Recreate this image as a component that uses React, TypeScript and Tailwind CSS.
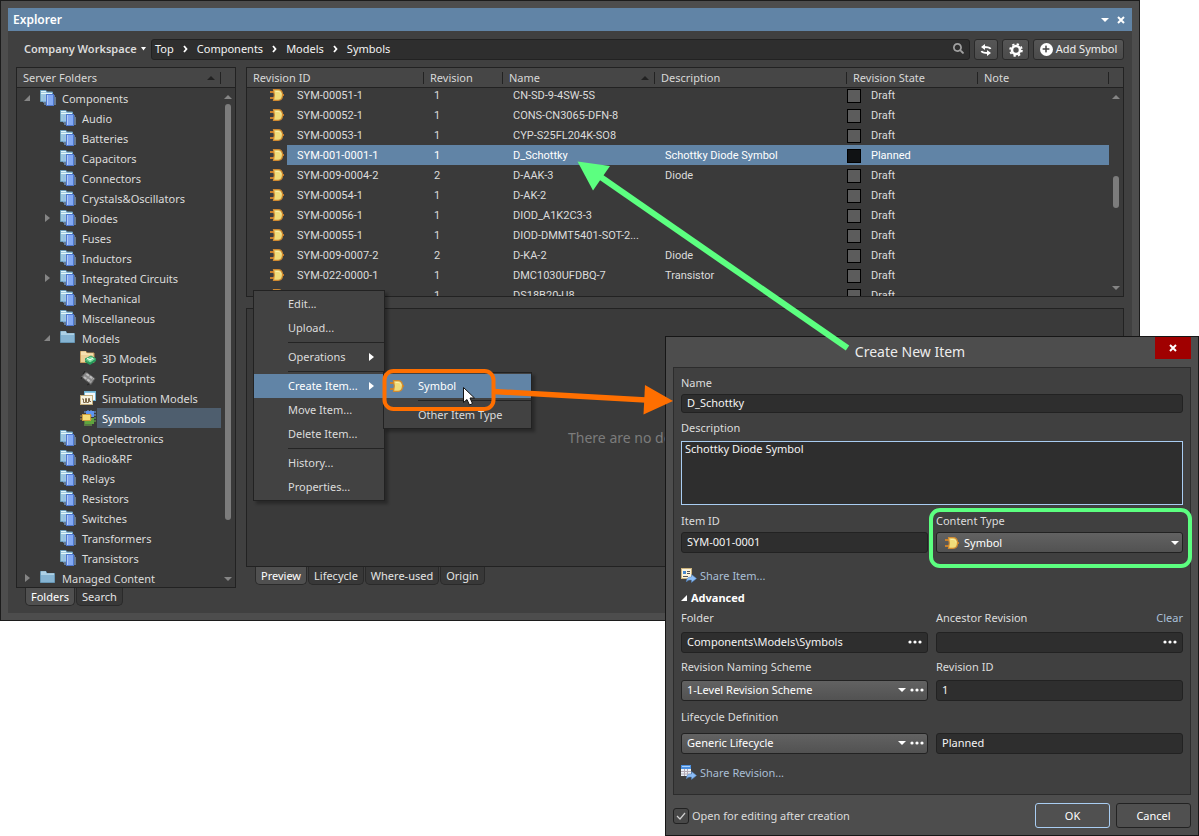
import { useState } from "react";
import { FaPlus, FaSearch } from "react-icons/fa";

const tree = [
  { name: "Components", depth: 0, icon: "parts", arrow: "open" },
  { name: "Audio", depth: 1, icon: "parts" },
  { name: "Batteries", depth: 1, icon: "parts" },
  { name: "Capacitors", depth: 1, icon: "parts" },
  { name: "Connectors", depth: 1, icon: "parts" },
  { name: "Crystals&Oscillators", depth: 1, icon: "parts" },
  { name: "Diodes", depth: 1, icon: "parts", arrow: "closed" },
  { name: "Fuses", depth: 1, icon: "parts" },
  { name: "Inductors", depth: 1, icon: "parts" },
  { name: "Integrated Circuits", depth: 1, icon: "parts", arrow: "closed" },
  { name: "Mechanical", depth: 1, icon: "parts" },
  { name: "Miscellaneous", depth: 1, icon: "parts" },
  { name: "Models", depth: 1, icon: "folder", arrow: "open" },
  { name: "3D Models", depth: 2, icon: "model3d" },
  { name: "Footprints", depth: 2, icon: "footprint" },
  { name: "Simulation Models", depth: 2, icon: "simulation" },
  { name: "Symbols", depth: 2, icon: "symbols" },
  { name: "Optoelectronics", depth: 1, icon: "parts" },
  { name: "Radio&RF", depth: 1, icon: "parts" },
  { name: "Relays", depth: 1, icon: "parts" },
  { name: "Resistors", depth: 1, icon: "parts" },
  { name: "Switches", depth: 1, icon: "parts" },
  { name: "Transformers", depth: 1, icon: "parts" },
  { name: "Transistors", depth: 1, icon: "parts" },
  { name: "Managed Content", depth: 0, icon: "folder", arrow: "closed" },
];

const rows = [
  { id: "SYM-00051-1", rev: "1", name: "CN-SD-9-4SW-5S", desc: "", state: "Draft" },
  { id: "SYM-00052-1", rev: "1", name: "CONS-CN3065-DFN-8", desc: "", state: "Draft" },
  { id: "SYM-00053-1", rev: "1", name: "CYP-S25FL204K-SO8", desc: "", state: "Draft" },
  { id: "SYM-001-0001-1", rev: "1", name: "D_Schottky", desc: "Schottky Diode Symbol", state: "Planned" },
  { id: "SYM-009-0004-2", rev: "2", name: "D-AAK-3", desc: "Diode", state: "Draft" },
  { id: "SYM-00054-1", rev: "1", name: "D-AK-2", desc: "", state: "Draft" },
  { id: "SYM-00056-1", rev: "1", name: "DIOD_A1K2C3-3", desc: "", state: "Draft" },
  { id: "SYM-00055-1", rev: "1", name: "DIOD-DMMT5401-SOT-2...", desc: "", state: "Draft" },
  { id: "SYM-009-0007-2", rev: "2", name: "D-KA-2", desc: "Diode", state: "Draft" },
  { id: "SYM-022-0000-1", rev: "1", name: "DMC1030UFDBQ-7", desc: "Transistor", state: "Draft" },
  { id: "SYM-00057-1", rev: "1", name: "DS18B20-U8", desc: "", state: "Draft" },
];

const indent = ["pl-[7px]", "pl-[27px]", "pl-[47px]"];
const columns = "grid grid-cols-[177px_79px_152px_minmax(0,1fr)_131px_131px_14px]";
const field = "w-full min-w-0 rounded-[3px] border border-[#222] bg-[#2e2e2e] px-[5px] pb-[2px] text-[#f4f4f4] outline-none";
const combo = "flex h-[21px] items-center rounded-[3px] border border-[#222] bg-linear-to-b from-[#626262] to-[#525252]";
const toolButton = "flex h-[21px] items-center justify-center rounded-[3px] border border-[#2a2a2a] bg-linear-to-b from-[#565656] to-[#4b4b4b] text-[#f0f0f0]";

function GateIcon() {
  return (
    <svg width="14" height="12" viewBox="0 0 14 12" className="shrink-0">
      <path d="M0 3h4M0 9h4M11 6h3" stroke="#c9802c" strokeWidth="2" />
      <path d="M3.500 0.700H8C11 0.700 12.500 3.200 12.500 6S11 11.300 8 11.300H3.500L4.300 6z" fill="#f0dc7a" stroke="#d08a30" strokeWidth="1.200" />
      <path d="M5.500 2.500H8c2 0 3 1.500 3 3" fill="none" stroke="#fbf0a8" />
    </svg>
  );
}

function TreeIcon({ kind }: { kind: string }) {
  if (kind === "folder")
    return (
      <svg width="16" height="16" viewBox="0 0 16 16">
        <path d="M0.500 12.500V1.500H6l1 2h7.500v9z" fill="#86b4d2" stroke="#6796b4" />
        <path d="M1 2h5M1 4h13" stroke="#d5edf8" />
      </svg>
    );
  if (kind === "model3d")
    return (
      <svg width="16" height="16" viewBox="0 0 16 16">
        <path d="M0.500 12.500V1.500H6l1 1.500h7v9.500z" fill="#ecd199" stroke="#c79c5d" />
        <path d="M1 2h5M1 4h12" stroke="#fff0c8" />
        <path d="M5 9l6-3 5 3-6 4z" fill="#7ee0a0" stroke="#2c9c62" />
        <path d="M5 10v2l5 3 6-4V9l-6 4z" fill="#249a5c" />
        <path d="M7 8l3 2 3-2" stroke="#fff" fill="none" />
      </svg>
    );
  if (kind === "footprint")
    return (
      <svg width="16" height="16" viewBox="0 0 16 16">
        <path d="M1.500 7L6 2l9 6.500-4 6z" fill="#8a8a8a" stroke="#5a5a5a" />
        <path d="M4 7l7 5M6.500 4l7 5" stroke="#bdbdbd" strokeWidth="2" strokeDasharray="3 1" />
        <path d="M3 4l2-3M9 14l-2 1M2 7l-1 2" stroke="#222" />
      </svg>
    );
  if (kind === "simulation")
    return (
      <svg width="16" height="16" viewBox="0 0 16 16">
        <rect x="4.500" y="1.500" width="11" height="9" fill="#f3f8fa" stroke="#6fb1d0" />
        <path d="M5 2.500h10" stroke="#8cc8e2" />
        <rect x="0.500" y="5.500" width="12" height="9" fill="#f8f3df" stroke="#c2ad7c" />
        <path d="M2 9h1.500v3.500h2V8.500h1v4h2V8.500h1v3h1.500" fill="none" stroke="#7d6948" />
      </svg>
    );
  if (kind === "symbols")
    return (
      <svg width="16" height="16" viewBox="0 0 16 16">
        <path d="M4 2h12M4 5h12M8 0v3M11 0v3" stroke="#79a9ea" />
        <rect x="6" y="1" width="8" height="6" fill="#5d94f0" />
        <path d="M5 9v7M7 9v7M9 9v7M11 9v7M14 8h2M14 11h2" stroke="#72bb4c" />
        <rect x="5" y="8" width="9" height="6" fill="#5fa53e" />
        <path d="M0 6h12M0 9h12" stroke="#c9973e" />
        <rect x="2.500" y="4.500" width="8" height="6" fill="#f4dc78" stroke="#cd9d3c" />
      </svg>
    );
  return (
    <svg width="16" height="16" viewBox="0 0 16 16">
      <path d="M0.500 11.500V0.500H6l1 1.500h5.500v9.500z" fill="#9fc9de" stroke="#6d9fbe" />
      <path d="M1 1.500h5M1 3.500h11" stroke="#e4f6fc" />
      <path d="M3 6h2M3 8h2M3 10h2M3 12h3M4 14h2M14 6h1M14 8h2M14 10h2M14 12h2M14 14h2" stroke="#8fb9ec" />
      <rect x="6.500" y="4.500" width="7" height="11" fill="#83a9f3" stroke="#4f78cf" />
      <path d="M7.500 5v10" stroke="#b4ccfb" />
    </svg>
  );
}

function ShareIcon({ revision }: { revision?: boolean }) {
  return (
    <svg width="16" height="16" viewBox="0 0 16 16" className="shrink-0">
      {revision ? (
        <>
          <rect x="0" y="0" width="10" height="11" fill="#eaf1f7" />
          <path d="M0 0h10v4H0z" fill="#4a8fe0" />
          <path d="M0 6.500h10M0 9h10M3.500 4v7M6.500 4v7" stroke="#b3a9b4" />
          <path d="M1 1.500h8" stroke="#a8d0fa" />
        </>
      ) : (
        <>
          <rect x="0.500" y="0.500" width="10" height="10" fill="#fbf3dc" stroke="#cbb27a" />
          <rect x="2" y="3" width="3" height="3" fill="#4787cc" />
          <path d="M6 3.500h3M6 5.500h3M2 8.500h5" stroke="#555" />
        </>
      )}
      <path d="M5.500 14c0-4 1.500-5 5-5V6.500l5 4-5 4v-2.500c-2.500 0-4 0-5 2z" fill="#8bbcf5" stroke="#4f82c2" strokeWidth="0.500" />
    </svg>
  );
}

function Triangle({ dir, className = "" }: { dir: "up" | "down" | "right" | "corner"; className?: string }) {
  const shapes = { up: "0,6 4,2 8,6", down: "0,2 8,2 4,6", right: "1,0 6,4 1,8", corner: "6,1 6,7 0,7" };
  return (
    <svg width="8" height="8" viewBox="0 0 8 8" className={"shrink-0 " + className}>
      <polygon points={shapes[dir]} fill="currentColor" />
    </svg>
  );
}

function Cross() {
  return (
    <svg width="10" height="10" viewBox="0 0 10 10">
      <path d="M2 2l6 6M8 2l-6 6" stroke="currentColor" strokeWidth="2" />
    </svg>
  );
}

function Dots() {
  return (
    <svg width="14" height="4" viewBox="0 0 14 4">
      <circle cx="2" cy="2" r="1.600" fill="#fff" />
      <circle cx="7" cy="2" r="1.600" fill="#fff" />
      <circle cx="12" cy="2" r="1.600" fill="#fff" />
    </svg>
  );
}

function Tabs({ names, active }: { names: string[]; active: string }) {
  return (
    <div className="flex gap-px px-[9px]">
      {names.map((n) => (
        <button key={n}
          className={n === active
            ? "h-[18px] rounded-b-[5px] border border-t-0 border-[#2a2a2a] bg-[#505050] px-[5px] text-white"
            : "h-[18px] rounded-b-[5px] border border-t-0 border-[#2a2a2a] bg-[#383838] px-[5px] text-[#e4e4e4]"}>
          {n}
        </button>
      ))}
    </div>
  );
}

function Toolbar() {
  return (
    <div className="flex gap-1 pb-[7px] pt-2">
      <button className="flex h-[21px] w-[131px] shrink-0 items-center gap-1 whitespace-nowrap pb-px pl-2 font-semibold text-[#dcdcdc]">
        Company Workspace
        <svg width="5" height="4" viewBox="0 0 5 4"><path d="M0 0h5L2.500 3.500z" fill="#fff" /></svg>
      </button>
      <nav className="flex h-[21px] flex-1 items-center gap-[9px] rounded-[3px] border border-[#222] bg-[#2e2e2e] pb-[2px] pl-[3px] pr-[5px] text-[#f4f4f4]">
        {["Top", "Components", "Models", "Symbols"].map((n, i) => (
          <div key={n} className="flex items-center gap-[9px]">
            {i > 0 && (
              <svg width="5" height="8" viewBox="0 0 5 8"><path d="M1 1l2.500 3L1 7" fill="none" stroke="#fff" strokeWidth="1.800" /></svg>
            )}
            <a href="#">{n}</a>
          </div>
        ))}
        <FaSearch size={11} className="ml-auto text-[#a0a0a0]" />
      </nav>
      <button aria-label="Refresh" className={toolButton + " w-6"}>
        <svg width="12" height="12" viewBox="0 0 12 12" fill="none" stroke="#fff" strokeWidth="1.800">
          <path d="M10.500 5C10 3.500 8 3 4 3" />
          <path d="M1.500 7C2 8.500 4 9 8 9" />
          <path d="M5 0L1 3l4 3zM7 6l4 3-4 3z" fill="#fff" stroke="none" />
        </svg>
      </button>
      <button aria-label="Settings" className={toolButton + " w-[27px]"}>
        <svg width="14" height="14" viewBox="0 0 14 14" fill="none" stroke="#fff">
          <circle cx="7" cy="7" r="4" strokeWidth="2.600" />
          <circle cx="7" cy="7" r="5.900" strokeWidth="1.800" strokeDasharray="2.317 2.317" />
        </svg>
      </button>
      <button className={toolButton + " w-[91px] gap-[3px] pb-px"}>
        <span className="flex size-[13px] items-center justify-center rounded-full bg-white text-[#444]"><FaPlus size={8} /></span>
        Add Symbol
      </button>
    </div>
  );
}

function FolderTree() {
  const [selected, setSelected] = useState("Symbols");
  return (
    <div className="flex w-[220px] shrink-0 flex-col">
      <div className="border border-[#222] bg-[#3a3a3a]">
        <div className="flex h-5 items-center border-b border-[#222] bg-[#464646] pl-[6px] pr-[14px] text-[#d8d8d8]">
          Server Folders
          <Triangle dir="up" className="ml-auto text-[#222]" />
          <span className="ml-[5px] h-3 w-px bg-[#222]" />
        </div>
        <div className="flex h-[499px] overflow-hidden">
          <ul className="flex-1">
            {tree.map((t) => (
              <li key={t.name}>
                <button onClick={() => setSelected(t.name)} className={"flex h-5 w-full items-center " + indent[t.depth]}>
                  <span className="w-4 shrink-0 text-[#858585]">
                    {t.arrow && <Triangle dir={t.arrow === "open" ? "corner" : "right"} />}
                  </span>
                  <span className="shrink-0"><TreeIcon kind={t.icon} /></span>
                  <span className={t.name === selected
                    ? "ml-px h-5 flex-1 bg-[#4e5e6e] pl-[5px] pt-px text-left leading-5 text-white"
                    : "ml-px h-5 flex-1 pl-[5px] pt-px text-left leading-5"}>
                    {t.name}
                  </span>
                </button>
              </li>
            ))}
          </ul>
          <div className="flex w-[14px] flex-col items-center justify-between pb-1 pt-[5px] text-[#858585]">
            <Triangle dir="up" />
            <div className="mb-auto mt-[3px] h-[416px] w-[6px] rounded-full bg-[#7c7c7c]" />
            <Triangle dir="down" />
          </div>
        </div>
      </div>
      <Tabs names={["Folders", "Search"]} active="Folders" />
    </div>
  );
}

function ItemTable() {
  const [picked, setPicked] = useState("SYM-001-0001-1");
  return (
    <div className="relative h-[230px] overflow-hidden border border-[#222] bg-[#3a3a3a]">
      <table className="block">
        <thead className="relative block">
          <tr className={columns + " h-5 items-center border-b border-[#222] bg-[#464646] text-[#d8d8d8]"}>
            {["Revision ID", "Revision", "Name", "Description", "Revision State", "Note"].map((h) => (
              <th key={h} className="flex h-3 items-center justify-between border-r border-[#222] pl-[6px] pr-[5px] text-left font-normal">
                {h}
                {h === "Name" && <Triangle dir="up" className="text-[#222]" />}
              </th>
            ))}
          </tr>
        </thead>
        <tbody className="-mt-[3px] block font-[Roboto,sans-serif]">
          {rows.map((r) => {
            const bg = r.id === picked ? "bg-[#6184a6] text-white" : "";
            return (
              <tr key={r.id} onClick={() => setPicked(r.id)} className={columns + " h-5 leading-5"}>
                <td className="flex items-center">
                  <span className="flex w-10 justify-end pr-[3px]"><GateIcon /></span>
                  <span className={"h-5 flex-1 pl-[10px] pt-px " + bg}>{r.id}</span>
                </td>
                <td className={"h-5 pl-[10px] pt-px " + bg}>{r.rev}</td>
                <td className={"h-5 truncate pl-[10px] pt-px " + bg}>{r.name}</td>
                <td className={"h-5 pl-[10px] pt-px " + bg}>{r.desc}</td>
                <td className={"flex h-5 items-center gap-[10px] pt-px " + bg}>
                  <span className={r.state === "Planned" ? "size-[14px] border border-black bg-[#101214]" : "size-[14px] border border-black bg-[#5c5c5c]"} />
                  {r.state}
                </td>
                <td className={bg} />
              </tr>
            );
          })}
        </tbody>
      </table>
      <div className="absolute bottom-0 right-0 top-5 flex w-[14px] flex-col items-center justify-between bg-[#3a3a3a] pb-1 pt-[5px] text-[#858585]">
        <Triangle dir="up" />
        <div className="mb-auto mt-[75px] h-8 w-[6px] rounded-full bg-[#7c7c7c]" />
        <Triangle dir="down" />
      </div>
    </div>
  );
}

function MenuItem({ label, arrow, active, icon }: { label: string; arrow?: boolean; active?: boolean; icon?: boolean }) {
  return (
    <button className={active ? "flex h-6 w-full items-center bg-[#6184a6] pr-2 text-white" : "flex h-6 w-full items-center pr-2"}>
      <span className="flex w-[34px] pl-[6px]">{icon && <GateIcon />}</span>
      {label}
      {arrow && <Triangle dir="right" className="ml-auto text-white" />}
    </button>
  );
}

function MenuLine() {
  return <div className="my-[2px] ml-[34px] h-px bg-[#242424]" />;
}

function ContextMenu() {
  return (
    <div className="absolute left-[253px] top-[290px]">
      <div className="w-[132px] border border-[#222] bg-[#424242] py-px shadow-[3px_3px_3px_rgba(0,0,0,0.300)]">
        <MenuItem label="Edit..." />
        <MenuItem label="Upload..." />
        <MenuLine />
        <MenuItem label="Operations" arrow />
        <MenuLine />
        <MenuItem label="Create Item..." arrow active />
        <MenuItem label="Move Item..." />
        <MenuItem label="Delete Item..." />
        <MenuLine />
        <MenuItem label="History..." />
        <MenuItem label="Properties..." />
      </div>
      <div className="absolute left-[130px] top-[82px] w-[149px] border border-[#222] bg-[#424242] py-px shadow-[3px_3px_3px_rgba(0,0,0,0.300)]">
        <MenuItem label="Symbol" icon active />
        <MenuLine />
        <MenuItem label="Other Item Type" />
      </div>
    </div>
  );
}

function Explorer() {
  return (
    <div className="mr-[59px] border border-[#1c1c1c] bg-[#4d4d4d] p-[7px]">
      <div className="flex h-[23px] items-center gap-[7px] bg-[#6184a6] pl-[5px] pr-[6px] text-white">
        <h1 className="flex-1 text-[12px] font-semibold">Explorer</h1>
        <Triangle dir="down" />
        <button aria-label="Close panel"><Cross /></button>
      </div>
      <div className="bg-[#404040] px-2 pb-[7px]">
        <Toolbar />
        <div className="flex gap-[10px]">
          <FolderTree />
          <div className="flex min-w-0 flex-1 flex-col pb-[21px]">
            <ItemTable />
            <div className="mt-[11px] flex flex-1 items-center justify-center border border-[#222] bg-[#3a3a3a] text-[14px] text-[#7c7c7c]">
              There are no details to be displayed
            </div>
            <Tabs names={["Preview", "Lifecycle", "Where-used", "Origin"]} active="Preview" />
          </div>
        </div>
      </div>
    </div>
  );
}

function CreateDialog() {
  const [name, setName] = useState("D_Schottky");
  const [desc, setDesc] = useState("Schottky Diode Symbol");
  const [open, setOpen] = useState(true);
  return (
    <div className="absolute right-0 top-[336px] w-[534px] border border-[#161616] bg-[#4d4d4d] px-[7px] pb-[7px]">
      <div className="flex h-[30px] items-start">
        <h2 className="flex-1 self-center pr-2 text-center text-[14px] text-[#ececec]">Create New Item</h2>
        <button aria-label="Close" className="flex h-[22px] w-9 items-center justify-center bg-[#a00000] text-white"><Cross /></button>
      </div>

      <div className="border border-[#2c2c2c] bg-[#404040] px-[7px] pb-[13px] pt-[7px]">
        <label htmlFor="name" className="mb-[3px] block">Name</label>
        <input id="name" className={field + " block h-[19px]"} value={name} onChange={(e) => setName(e.target.value)} />

        <label htmlFor="desc" className="mb-[5px] mt-[7px] block">Description</label>
        <textarea id="desc" className="block h-16 w-full resize-none border border-[#a9cdf2] bg-[#2e2e2e] px-[3px] leading-[14px] text-[#f4f4f4] outline-none"
          value={desc} onChange={(e) => setDesc(e.target.value)} />

        <div className="mt-2 grid grid-cols-2 gap-x-2">
          <div>
            <label htmlFor="itemId" className="mb-[3px] block">Item ID</label>
            <input id="itemId" className={field + " block h-[21px]"} defaultValue="SYM-001-0001" />
          </div>
          <div>
            <label htmlFor="type" className="mb-[3px] block">Content Type</label>
            <div className={combo + " gap-[5px] pl-2 pr-[3px]"}>
              <GateIcon />
              <select id="type" className="flex-1 appearance-none text-white outline-none"><option>Symbol</option></select>
              <Triangle dir="down" className="text-white" />
            </div>
          </div>
        </div>

        <a href="#" className="mt-[15px] flex items-center gap-[3px] text-[#a9bfd6]"><ShareIcon />Share Item...</a>
        <button className="mt-[6px] flex items-center gap-[3px] font-bold text-white">
          <svg width="7" height="7" viewBox="0 0 7 7"><path d="M6 0v6H0z" fill="#fff" /></svg>
          Advanced
        </button>

        <div className="mt-1 grid grid-cols-2 gap-x-2">
          <div>
            <label htmlFor="folder" className="mb-[6px] block">Folder</label>
            <div className={field + " flex h-[21px] items-center"}>
              <input id="folder" className="min-w-0 flex-1 outline-none" defaultValue="Components\Models\Symbols" />
              <button aria-label="Browse folder"><Dots /></button>
            </div>
          </div>
          <div>
            <div className="mb-[6px] flex justify-between">
              <label htmlFor="ancestor">Ancestor Revision</label>
              <a href="#" className="text-[#a9bfd6]">Clear</a>
            </div>
            <div className={field + " flex h-[21px] items-center"}>
              <input id="ancestor" className="min-w-0 flex-1 outline-none" />
              <button aria-label="Browse ancestor"><Dots /></button>
            </div>
          </div>
        </div>

        <div className="mt-[6px] grid grid-cols-2 gap-x-2">
          <div>
            <label htmlFor="scheme" className="mb-[5px] block">Revision Naming Scheme</label>
            <div className={combo + " gap-1 pb-[2px] pl-[5px] pr-[3px]"}>
              <select id="scheme" className="flex-1 appearance-none text-white outline-none"><option>1-Level Revision Scheme</option></select>
              <Triangle dir="down" className="text-white" />
              <button aria-label="Edit scheme"><Dots /></button>
            </div>
          </div>
          <div>
            <label htmlFor="revId" className="mb-[5px] block">Revision ID</label>
            <input id="revId" className={field + " block h-[21px]"} defaultValue="1" />
          </div>
        </div>

        <label htmlFor="lifecycle" className="mb-2 mt-2 block">Lifecycle Definition</label>
        <div className="grid grid-cols-2 gap-x-2">
          <div className={combo + " gap-1 pb-[2px] pl-[5px] pr-[3px]"}>
            <select id="lifecycle" className="flex-1 appearance-none text-white outline-none"><option>Generic Lifecycle</option></select>
            <Triangle dir="down" className="text-white" />
            <button aria-label="Edit lifecycle"><Dots /></button>
          </div>
          <input aria-label="Lifecycle state" className={field + " block h-[21px]"} defaultValue="Planned" />
        </div>

        <a href="#" className="mt-[11px] flex items-center gap-[3px] text-[#a9bfd6]"><ShareIcon revision />Share Revision...</a>
      </div>

      <div className="mt-2 flex items-center gap-[6px]">
        <label className="mr-auto flex items-center gap-[3px]">
          <span className="relative flex size-4">
            <input type="checkbox" checked={open} onChange={(e) => setOpen(e.target.checked)}
              className="size-4 appearance-none rounded-[3px] border border-[#222] bg-[#484848]" />
            {open && (
              <svg width="16" height="16" viewBox="0 0 16 16" className="pointer-events-none absolute inset-0">
                <path d="M4 8l3 3 5-6" fill="none" stroke="#d0d0d0" strokeWidth="1.200" />
              </svg>
            )}
          </span>
          Open for editing after creation
        </label>
        <button className="h-[25px] w-[75px] rounded-[3px] border border-[#a9cdf2] bg-[#505050] text-white">OK</button>
        <button className="h-[25px] w-[75px] rounded-[3px] border border-[#222] bg-[#505050] text-white">Cancel</button>
      </div>
    </div>
  );
}

// Callout arrows and frames drawn over both windows
function Callouts() {
  return (
    <svg width="1199" height="836" viewBox="0 0 1199 836" className="pointer-events-none absolute left-0 top-0">
      <g stroke="#5cff80" fill="none">
        <path d="M600 176.500L847.500 348" strokeWidth="6" />
        <polygon points="577.500,161.500 610,166 593,190.500" fill="#5cff80" stroke="none" />
        <rect x="931" y="510" width="259" height="56" rx="9" strokeWidth="4" />
      </g>
      <g stroke="#ff6f00" fill="none">
        <rect x="384.500" y="371" width="109" height="38" rx="9" strokeWidth="4" />
        <path d="M494 391.500L646 400" strokeWidth="5.500" />
        <polygon points="645,385 643.500,414.500 673,401" fill="#ff6f00" stroke="none" />
      </g>
      <path d="M463.500 387.500v15l3.500-3 2.500 5.500 3-1.500-2.500-5.500h4.500z" fill="#fff" stroke="#111" />
    </svg>
  );
}

export default function App() {
  return (
    <div className="relative min-h-screen bg-white font-['Noto_Sans',sans-serif] text-[11px] leading-4 text-[#dcdcdc]">
      <Explorer />
      <ContextMenu />
      <CreateDialog />
      <Callouts />
    </div>
  );
}
